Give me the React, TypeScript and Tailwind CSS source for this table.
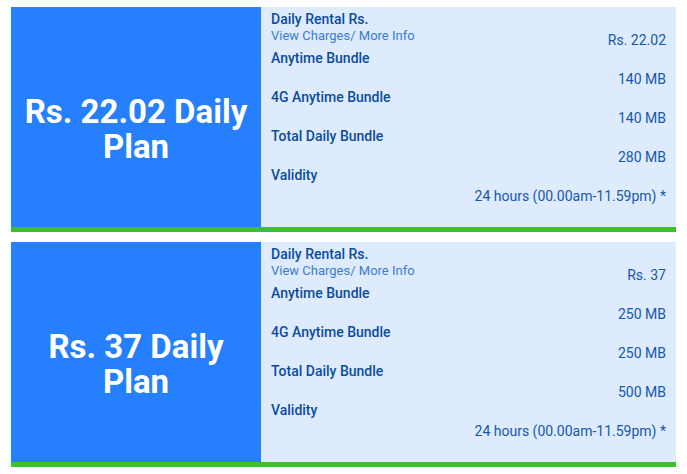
import React from "react";

type Plan = {
  title: string;
  rental: string;
  anytime: string;
  fourG: string;
  total: string;
};

const plans: Plan[] = [
  { title: "Rs. 22.02 Daily Plan", rental: "Rs. 22.02", anytime: "140 MB", fourG: "140 MB", total: "280 MB" },
  { title: "Rs. 37 Daily Plan", rental: "Rs. 37", anytime: "250 MB", fourG: "250 MB", total: "500 MB" },
];

function Row({ label, value }: { label: string; value: string }) {
  return (
    <div>
      <div className="text-[14px] leading-[18px] font-medium text-[#0b4c9e]">{label}</div>
      <div className="pt-[3px] text-right text-[14px] leading-[18px] text-[#1458ad]">{value}</div>
    </div>
  );
}

function Card({ p }: { p: Plan }) {
  return (
    <div className="flex flex-col">
      <div className="flex h-[220px]">
        <div className="w-[250px] bg-[#2680fe] flex items-center justify-center pt-[23px] px-2">
          <div className="text-white text-[33px] leading-[35px] font-bold text-center">{p.title}</div>
        </div>
        <div className="flex-1 bg-[#deebfc] pl-[10px] pr-[10px] pt-[3px]">
          <div className="text-[14px] leading-[18px] font-medium text-[#0b4c9e]">Daily Rental Rs.</div>
          <div className="flex justify-between h-[21px]">
            <div className="text-[13px] leading-[15px] text-[#3b7ccf]">View Charges/ More Info</div>
            <div className="pt-[3px] text-[14px] leading-[18px] text-[#1458ad]">{p.rental}</div>
          </div>
          <Row label="Anytime Bundle" value={p.anytime} />
          <Row label="4G Anytime Bundle" value={p.fourG} />
          <Row label="Total Daily Bundle" value={p.total} />
          <Row label="Validity" value="24 hours (00.00am-11.59pm) *" />
        </div>
      </div>
      <div className="h-[5px] bg-[#3cc12d]" />
    </div>
  );
}

export default function App() {
  return (
    <div
      className="w-[687px] h-[474px] bg-white pt-[7px] pl-[11px] pr-[11px] flex flex-col gap-[10px]"
      style={{ fontFamily: "Roboto, 'Liberation Sans', sans-serif" }}
    >
      {plans.map((p) => (
        <Card key={p.title} p={p} />
      ))}
    </div>
  );
}
